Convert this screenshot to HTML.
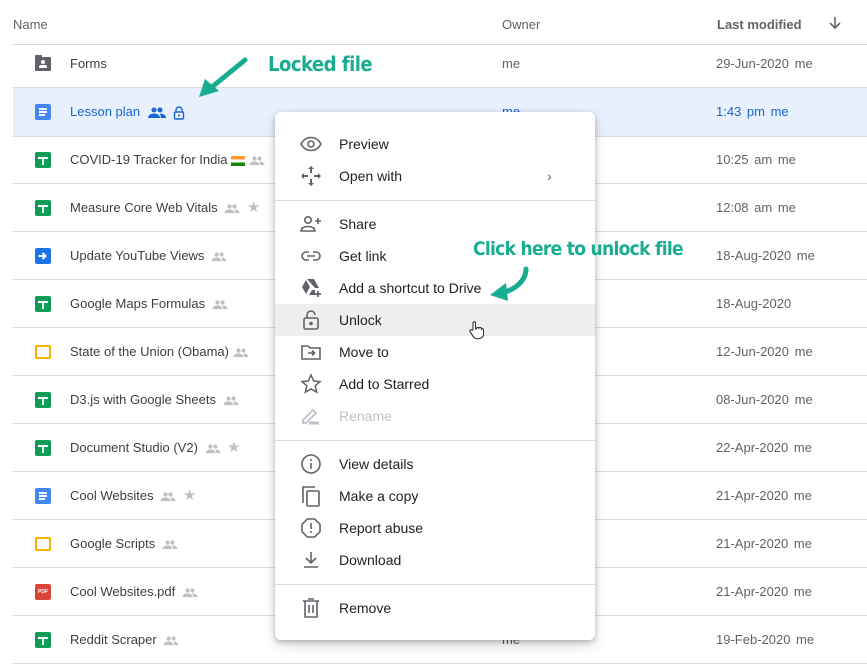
<!DOCTYPE html>
<html><head><meta charset="utf-8"><style>
*{margin:0;padding:0;box-sizing:border-box}
body{width:867px;height:664px;overflow:hidden;background:#fff;font-family:"Liberation Sans",Roboto,sans-serif;position:relative;color:#3c4043}
.a{position:absolute}
.hdr{font-size:13px;color:#5f6368;top:17px}
.line{position:absolute;left:13px;right:0;height:1px;background:#dadce0}
.row{position:absolute;left:13px;right:0;height:48px}
.nm{position:absolute;left:57px;top:0;line-height:48px;font-size:13px;color:#3c4043;white-space:nowrap}
.ic{position:absolute;left:22px;top:16px;width:16px;height:16px;border-radius:2px}
.sh{background:#0f9d58}
.sh:before{content:"";position:absolute;left:3px;right:3px;top:5px;height:2px;background:#fff}
.sh:after{content:"";position:absolute;left:7px;width:2px;top:5px;bottom:3px;background:#fff}
.dc{background:#4285f4}
.dc i{position:absolute;left:4px;height:1.6px;background:#fff}
.sl{border:2.5px solid #f4b400;height:14px;top:17px;border-radius:2px}
.pdf{background:#db4437;color:#fff;font-size:5px;font-weight:bold;text-align:center;line-height:16px}
.ow{position:absolute;left:489px;line-height:48px;font-size:13px;color:#5f6368;top:0}
.dt{position:absolute;left:703px;line-height:48px;font-size:13px;color:#5f6368;top:0;word-spacing:2px}
svg.x{vertical-align:middle}
.menu{position:absolute;left:275px;top:112px;width:320px;height:528px;background:#fff;border-radius:6px;box-shadow:0 2px 6px rgba(0,0,0,.25),0 6px 14px rgba(0,0,0,.12)}
.mi{position:absolute;left:0;width:320px;height:32px;line-height:32px;font-size:14px;color:#202124}
.mi span{position:absolute;left:64px}
.mi svg{position:absolute;left:24px;top:4px}
.md{position:absolute;left:0;width:320px;height:1px;background:#dadce0}
.hand{position:absolute;color:#18ad91;font-family:"DejaVu Sans Condensed","DejaVu Sans",sans-serif;font-weight:bold;font-size:20px;letter-spacing:-0.5px}
</style></head><body>
<div class="a hdr" style="left:13px">Name</div>
<div class="a hdr" style="left:502px">Owner</div>
<div class="a hdr" style="left:717px;font-weight:bold">Last modified</div>
<svg class="a" style="left:827px;top:15px" width="16" height="16" viewBox="0 0 16 16"><path d="M8 2v11M3 8l5 5 5-5" stroke="#5f6368" stroke-width="1.6" fill="none"/></svg>
<div class="line" style="top:44px"></div>

<div class="row" style="top:40px"><div class="ic" style="background:#5f6368;border-radius:1px;top:17px;height:14px"><div style="position:absolute;left:-0px;top:-2px;width:7px;height:3px;background:#5f6368;border-radius:1px"></div><div style="position:absolute;left:6px;top:3px;width:4px;height:4px;border-radius:50%;background:#fff"></div><div style="position:absolute;left:4px;top:8px;width:8px;height:3px;border-radius:2px 2px 0 0;background:#fff"></div></div><div class="nm">Forms</div><div class="ow">me</div><div class="dt">29-Jun-2020 me</div></div>
<div class="line" style="top:87px"></div>
<div class="row" style="top:88px;height:48px;background:#e8f0fe"><div class="ic dc"><i style="top:4px;width:8px"></i><i style="top:7px;width:8px"></i><i style="top:10px;width:6px"></i></div><div class="nm" style="color:#1967d2">Lesson plan <svg class="x" width="18" height="12" viewBox="0 0 18 12" style="margin-left:4px"><circle cx="6" cy="3" r="2.5" fill="#1967d2"/><circle cx="12" cy="3" r="2.5" fill="#1967d2"/><path d="M0 11c0-3 3-4.5 6-4.5s6 1.5 6 4.5zM12 6.5c3 0 6 1.5 6 4.5h-5" fill="#1967d2"/></svg> <svg class="x" width="12" height="14" viewBox="0 0 12 14" style="margin-left:4px"><path d="M3 6V4a3 3 0 016 0v2" stroke="#1967d2" stroke-width="1.4" fill="none"/><rect x="1.5" y="6" width="9" height="7" rx="1" stroke="#1967d2" stroke-width="1.4" fill="none"/><circle cx="6" cy="9.5" r="1" fill="#1967d2"/></svg></div><div class="ow" style="color:#1967d2">me</div><div class="dt" style="color:#1967d2">1:43 pm me</div></div>
<div class="line" style="top:136px"></div>

<div class="row" style="top:136px"><div class="ic sh"></div><div class="nm">COVID-19 Tracker for India <span style="display:inline-block;width:14px;height:10px;vertical-align:middle;background:linear-gradient(#f93 33%,#fff 33%,#fff 66%,#138808 66%)"></span> <svg class="x" width="16" height="10" viewBox="0 0 18 12"><circle cx="6" cy="3" r="2.5" fill="#bdc1c6"/><circle cx="12" cy="3" r="2.5" fill="#bdc1c6"/><path d="M0 11c0-3 3-4.5 6-4.5s6 1.5 6 4.5zM12 6.5c3 0 6 1.5 6 4.5h-5" fill="#bdc1c6"/></svg></div><div class="dt">10:25 am me</div></div>
<div class="line" style="top:183px"></div>
<div class="row" style="top:184px"><div class="ic sh"></div><div class="nm">Measure Core Web Vitals <svg class="x" width="16" height="10" viewBox="0 0 18 12" style="margin-left:3px"><circle cx="6" cy="3" r="2.5" fill="#bdc1c6"/><circle cx="12" cy="3" r="2.5" fill="#bdc1c6"/><path d="M0 11c0-3 3-4.5 6-4.5s6 1.5 6 4.5zM12 6.5c3 0 6 1.5 6 4.5h-5" fill="#bdc1c6"/></svg> <span style="color:#bdc1c6;font-size:15px;margin-left:3px">★</span></div><div class="dt">12:08 am me</div></div>
<div class="line" style="top:231px"></div>
<div class="row" style="top:232px"><div class="ic" style="background:#1a73e8"><svg width="16" height="16" viewBox="0 0 16 16"><path d="M3.5 8h6M7.5 5l3 3-3 3" stroke="#fff" stroke-width="2" fill="none"/></svg></div><div class="nm">Update YouTube Views <svg class="x" width="16" height="10" viewBox="0 0 18 12" style="margin-left:3px"><circle cx="6" cy="3" r="2.5" fill="#bdc1c6"/><circle cx="12" cy="3" r="2.5" fill="#bdc1c6"/><path d="M0 11c0-3 3-4.5 6-4.5s6 1.5 6 4.5zM12 6.5c3 0 6 1.5 6 4.5h-5" fill="#bdc1c6"/></svg></div><div class="dt">18-Aug-2020 me</div></div>
<div class="line" style="top:279px"></div>
<div class="row" style="top:280px"><div class="ic sh"></div><div class="nm">Google Maps Formulas <svg class="x" width="16" height="10" viewBox="0 0 18 12" style="margin-left:3px"><circle cx="6" cy="3" r="2.5" fill="#bdc1c6"/><circle cx="12" cy="3" r="2.5" fill="#bdc1c6"/><path d="M0 11c0-3 3-4.5 6-4.5s6 1.5 6 4.5zM12 6.5c3 0 6 1.5 6 4.5h-5" fill="#bdc1c6"/></svg></div><div class="dt">18-Aug-2020</div></div>
<div class="line" style="top:327px"></div>
<div class="row" style="top:328px"><div class="ic sl"></div><div class="nm">State of the Union (Obama) <svg class="x" width="16" height="10" viewBox="0 0 18 12"><circle cx="6" cy="3" r="2.5" fill="#bdc1c6"/><circle cx="12" cy="3" r="2.5" fill="#bdc1c6"/><path d="M0 11c0-3 3-4.5 6-4.5s6 1.5 6 4.5zM12 6.5c3 0 6 1.5 6 4.5h-5" fill="#bdc1c6"/></svg></div><div class="dt">12-Jun-2020 me</div></div>
<div class="line" style="top:375px"></div>
<div class="row" style="top:376px"><div class="ic sh"></div><div class="nm">D3.js with Google Sheets <svg class="x" width="16" height="10" viewBox="0 0 18 12" style="margin-left:3px"><circle cx="6" cy="3" r="2.5" fill="#bdc1c6"/><circle cx="12" cy="3" r="2.5" fill="#bdc1c6"/><path d="M0 11c0-3 3-4.5 6-4.5s6 1.5 6 4.5zM12 6.5c3 0 6 1.5 6 4.5h-5" fill="#bdc1c6"/></svg></div><div class="dt">08-Jun-2020 me</div></div>
<div class="line" style="top:423px"></div>
<div class="row" style="top:424px"><div class="ic sh"></div><div class="nm">Document Studio (V2) <svg class="x" width="16" height="10" viewBox="0 0 18 12" style="margin-left:3px"><circle cx="6" cy="3" r="2.5" fill="#bdc1c6"/><circle cx="12" cy="3" r="2.5" fill="#bdc1c6"/><path d="M0 11c0-3 3-4.5 6-4.5s6 1.5 6 4.5zM12 6.5c3 0 6 1.5 6 4.5h-5" fill="#bdc1c6"/></svg> <span style="color:#bdc1c6;font-size:15px;margin-left:3px">★</span></div><div class="dt">22-Apr-2020 me</div></div>
<div class="line" style="top:471px"></div>
<div class="row" style="top:472px"><div class="ic dc"><i style="top:4px;width:8px"></i><i style="top:7px;width:8px"></i><i style="top:10px;width:6px"></i></div><div class="nm">Cool Websites <svg class="x" width="16" height="10" viewBox="0 0 18 12" style="margin-left:3px"><circle cx="6" cy="3" r="2.5" fill="#bdc1c6"/><circle cx="12" cy="3" r="2.5" fill="#bdc1c6"/><path d="M0 11c0-3 3-4.5 6-4.5s6 1.5 6 4.5zM12 6.5c3 0 6 1.5 6 4.5h-5" fill="#bdc1c6"/></svg> <span style="color:#bdc1c6;font-size:15px;margin-left:3px">★</span></div><div class="dt">21-Apr-2020 me</div></div>
<div class="line" style="top:519px"></div>
<div class="row" style="top:520px"><div class="ic sl"></div><div class="nm">Google Scripts <svg class="x" width="16" height="10" viewBox="0 0 18 12" style="margin-left:3px"><circle cx="6" cy="3" r="2.5" fill="#bdc1c6"/><circle cx="12" cy="3" r="2.5" fill="#bdc1c6"/><path d="M0 11c0-3 3-4.5 6-4.5s6 1.5 6 4.5zM12 6.5c3 0 6 1.5 6 4.5h-5" fill="#bdc1c6"/></svg></div><div class="dt">21-Apr-2020 me</div></div>
<div class="line" style="top:567px"></div>
<div class="row" style="top:568px"><div class="ic pdf">PDF</div><div class="nm">Cool Websites.pdf <svg class="x" width="16" height="10" viewBox="0 0 18 12" style="margin-left:3px"><circle cx="6" cy="3" r="2.5" fill="#bdc1c6"/><circle cx="12" cy="3" r="2.5" fill="#bdc1c6"/><path d="M0 11c0-3 3-4.5 6-4.5s6 1.5 6 4.5zM12 6.5c3 0 6 1.5 6 4.5h-5" fill="#bdc1c6"/></svg></div><div class="dt">21-Apr-2020 me</div></div>
<div class="line" style="top:615px"></div>
<div class="row" style="top:616px"><div class="ic sh"></div><div class="nm">Reddit Scraper <svg class="x" width="16" height="10" viewBox="0 0 18 12" style="margin-left:3px"><circle cx="6" cy="3" r="2.5" fill="#bdc1c6"/><circle cx="12" cy="3" r="2.5" fill="#bdc1c6"/><path d="M0 11c0-3 3-4.5 6-4.5s6 1.5 6 4.5zM12 6.5c3 0 6 1.5 6 4.5h-5" fill="#bdc1c6"/></svg></div><div class="ow">me</div><div class="dt">19-Feb-2020 me</div></div>
<div class="line" style="top:663px"></div>

<div class="menu">
<div class="mi" style="top:16px"><svg width="24" height="24" viewBox="0 0 24 24"><path d="M2 12c2.5-4.5 6-6.5 10-6.5s7.5 2 10 6.5c-2.5 4.5-6 6.5-10 6.5S4.5 16.5 2 12z" stroke="#5f6368" stroke-width="1.6" fill="none"/><circle cx="12" cy="12" r="3" stroke="#5f6368" stroke-width="1.6" fill="none"/></svg><span>Preview</span></div>
<div class="mi" style="top:48px"><svg width="24" height="24" viewBox="0 0 24 24" fill="#5f6368"><path d="M12 2l3 3h-2v4h-2V5H9zM12 22l-3-3h2v-4h2v4h2zM2 12l3-3v2h4v2H5v2zM22 12l-3 3v-2h-4v-2h4V9z"/></svg><span>Open with</span><b style="position:absolute;left:272px;font-weight:normal;color:#5f6368">›</b></div>
<div class="md" style="top:88px"></div>
<div class="mi" style="top:96px"><svg width="24" height="24" viewBox="0 0 24 24" fill="none" stroke="#5f6368" stroke-width="1.6"><circle cx="9" cy="8" r="3.2"/><path d="M2 19c0-3 3.5-4.5 7-4.5s7 1.5 7 4.5zM19 6v6M16 9h6"/></svg><span>Share</span></div>
<div class="mi" style="top:128px"><svg width="24" height="24" viewBox="0 0 24 24" fill="none" stroke="#5f6368" stroke-width="1.6"><path d="M10 8H7a4 4 0 000 8h3M14 8h3a4 4 0 010 8h-3M8 12h8"/></svg><span>Get link</span></div>
<div class="mi" style="top:160px"><svg width="24" height="24" viewBox="0 0 24 24" fill="#5f6368"><path d="M8 3h7l5 9h-4zM7 4l4 7-4 7-4-7zM10 19l3-5h3v5z"/><path d="M19 15v6M16 18h6" stroke="#5f6368" stroke-width="1.8"/></svg><span>Add a shortcut to Drive</span></div>
<div class="mi" style="top:192px;background:#eeeeee"><svg width="24" height="24" viewBox="0 0 24 24" fill="none" stroke="#5f6368" stroke-width="1.6"><path d="M8 10V7a4 4 0 018 0"/><rect x="5" y="10" width="14" height="11" rx="1.5"/><circle cx="12" cy="15.5" r="1" fill="#5f6368"/></svg><span>Unlock</span></div>
<div class="mi" style="top:224px"><svg width="24" height="24" viewBox="0 0 24 24" fill="none" stroke="#5f6368" stroke-width="1.6"><path d="M3 6h6l2 2h10v11H3z"/><path d="M9 13h6M13 10.5l2.5 2.5-2.5 2.5"/></svg><span>Move to</span></div>
<div class="mi" style="top:256px"><svg width="24" height="24" viewBox="0 0 24 24" fill="none" stroke="#5f6368" stroke-width="1.5"><path d="M12 3l2.7 6 6.3.6-4.8 4.2 1.5 6.4L12 16.9l-5.7 3.3 1.5-6.4L3 9.6 9.3 9z"/></svg><span>Add to Starred</span></div>
<div class="mi" style="top:288px;color:#bdc1c6"><svg width="24" height="24" viewBox="0 0 24 24" fill="none" stroke="#bdc1c6" stroke-width="1.8"><path d="M4 19v-3l10-10 3 3-10 10z"/><path d="M10 19h10" stroke-width="3"/></svg><span>Rename</span></div>
<div class="md" style="top:328px"></div>
<div class="mi" style="top:336px"><svg width="24" height="24" viewBox="0 0 24 24" fill="none" stroke="#5f6368" stroke-width="1.6"><circle cx="12" cy="12" r="9"/><path d="M12 11v6M12 7v2"/></svg><span>View details</span></div>
<div class="mi" style="top:368px"><svg width="24" height="24" viewBox="0 0 24 24" fill="none" stroke="#5f6368" stroke-width="1.6"><path d="M4 19V3h12"/><rect x="8" y="7" width="12" height="15" rx="1"/></svg><span>Make a copy</span></div>
<div class="mi" style="top:400px"><svg width="24" height="24" viewBox="0 0 24 24" fill="none" stroke="#5f6368" stroke-width="1.6"><path d="M8.3 3h7.4L21 8.3v7.4L15.7 21H8.3L3 15.7V8.3z"/><path d="M12 7v6M12 15v2"/></svg><span>Report abuse</span></div>
<div class="mi" style="top:432px"><svg width="24" height="24" viewBox="0 0 24 24" fill="none" stroke="#5f6368" stroke-width="1.6"><path d="M12 4v11M7 10l5 5 5-5M5 19h14"/></svg><span>Download</span></div>
<div class="md" style="top:472px"></div>
<div class="mi" style="top:480px"><svg width="24" height="24" viewBox="0 0 24 24" fill="none" stroke="#5f6368" stroke-width="1.6"><path d="M4 5h16M9 3h6M6 5v16h12V5M10 9v8M14 9v8"/></svg><span>Remove</span></div>
</div>

<div class="hand" style="left:268px;top:52px">Locked file</div>
<svg class="a" style="left:195px;top:55px" width="60" height="45" viewBox="0 0 60 45"><path d="M50 5L12 36" stroke="#18ad91" stroke-width="5" stroke-linecap="round" fill="none"/><path d="M4 42l6-18 14 12z" fill="#18ad91"/></svg>
<div class="hand" style="left:473px;top:238px;font-size:19px;letter-spacing:-0.7px">Click here to unlock file</div>
<svg class="a" style="left:488px;top:265px" width="50" height="40" viewBox="0 0 50 40"><path d="M38 4c0 12-12 22-26 24" stroke="#18ad91" stroke-width="5" stroke-linecap="round" fill="none"/><path d="M2 30l16-12 2 18z" fill="#18ad91"/></svg>
<svg class="a" style="left:468px;top:320px" width="16" height="20" viewBox="0 0 16 20"><path d="M5 10V3a1.3 1.3 0 012.6 0v6l1-.3a1.2 1.2 0 012.4 0 1.2 1.2 0 012.4 0v.5a1.2 1.2 0 012.2.5v4c0 3-2 5-5 5H9c-2 0-3-1-4-2.5L2 11.5a1.2 1.2 0 012-1.3z" fill="#fff" stroke="#222" stroke-width="1"/></svg>
</body></html>
